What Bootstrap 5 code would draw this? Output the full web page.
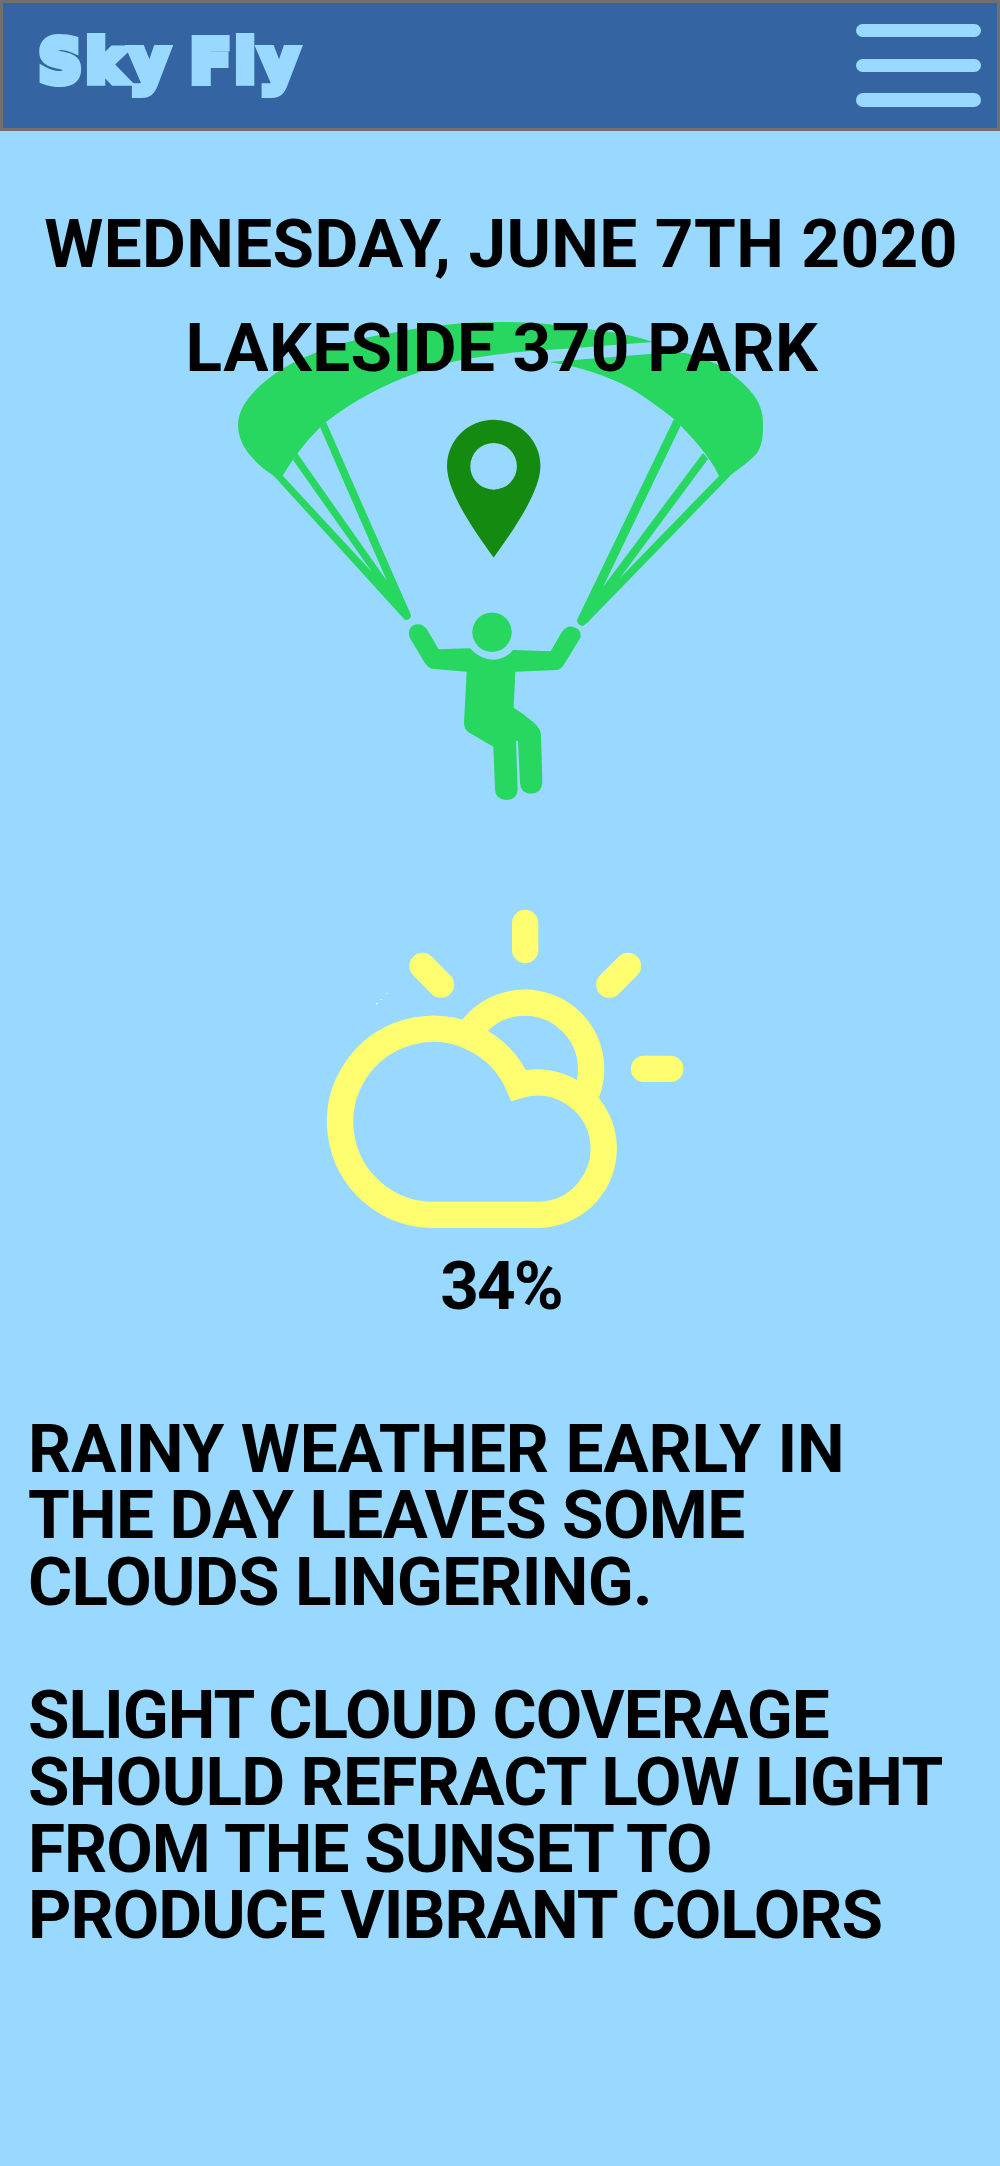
<!DOCTYPE html>
<html lang="en">
<head>
<meta charset="utf-8">
<meta name="viewport" content="width=device-width, initial-scale=1">
<title>Sky Fly</title>
<link href="https://cdn.jsdelivr.net/npm/bootstrap@5.3.0/dist/css/bootstrap.min.css" rel="stylesheet">
<style>
  body { background: #99d9ff; color: #000; font: 700 67.5px/66.67px Roboto, sans-serif; min-height: 2166px; overflow-x: hidden; }
  .topbar { height: 130.5px; background: #3465a2; border: 3px solid #707070; padding: 0 16px 0 36px; }
  .brand { font: 700 59px/60px "DejaVu Sans", sans-serif; color: #99d9ff; -webkit-text-stroke: 8px #99d9ff; paint-order: stroke; stroke-linejoin: round; letter-spacing: 4.6px; word-spacing: -8px; padding-bottom: 6px; text-decoration: none; white-space: nowrap; }
  .brand:hover { color: #99d9ff; }
  .burger { width: 125px; height: 83px; background: none; }
  .burger span { display: block; height: 13.5px; border-radius: 7px; background: #99d9ff; }
  .titles { margin-top: 61.5px; line-height: 104px; white-space: nowrap; }
  .titles h1, .titles h2 { font: inherit; margin: 0; }
  .titles h1 { letter-spacing: .38px; padding-left: 2px; }
  .titles h2 { letter-spacing: .41px; padding-left: 4px; }
  .glider { margin-top: -90px; }
  .weather { margin-top: 90px; }
  .chance { margin-top: 12.6px; letter-spacing: -2px; padding-left: 2px; }
  .report { margin-top: 96.3px; padding-left: 28px; white-space: nowrap; }
  .report p { margin-bottom: 66.67px; }
  .report span { display: block; }
  .ls-a { letter-spacing: -.14px; } .ls-b { letter-spacing: -.7px; }
  .ls-c { letter-spacing: -1px; } .ls-d { letter-spacing: -.7px; } .ls-e { letter-spacing: -1px; }
</style>
</head>
<body>
<header class="topbar d-flex align-items-center justify-content-between">
  <a class="brand" href="#">Sky Fly</a>
  <button class="burger border-0 p-0 d-flex flex-column justify-content-between" aria-label="Menu"><span class="w-100"></span><span class="w-100"></span><span class="w-100"></span></button>
</header>
<main>
  <div class="titles text-center position-relative z-1">
    <h1>WEDNESDAY, JUNE 7TH 2020</h1>
    <h2>LAKESIDE 370 PARK</h2>
  </div>
  <svg class="glider d-block" width="1000" height="500" viewBox="0 310 1000 500" aria-hidden="true">
    <g fill="#27d760">
      <!-- canopy -->
      <path d="M281 480 L274 476 C257 465 238 447 238 425 C238 407 253 391 268 379 C282 368 297 360 315 353 C341 342 368 337 397 332 C432 325 466 322 503 322 C533 322 560 325 588 329 C612 332 633 335 653 342 L600 346 C560 350 520 350 480 357 C455 360 436 366 420 372 C385 383 352 402 326 422 C311 435 294 456 282 477Z"/>
      <path d="M549 362 L650 354 Q668 351 685 353 C701 357 714 362 725 369 C737 377 748 387 755 397 C761 406 763 414 763 425 C763 438 762 445 757 453 C750 461 740 468 731 475 L722 482 L719 476 C714 465 707 456 700 447 C692 437 683 428 674 419 C660 408 645 397 630 388 C606 375 580 367 549 362Z"/>
      <!-- lines -->
      <path d="M273 475 L405 620 Q411 620 411 615 L326 422 L320 427 L387 581 L297 453 L293 460 L372 572 L283 476Z"/>
      <path d="M674 419 L577 620 Q577 625 583 626 L588 622 L730 476 L719 476 L620 578 L708 459 L703 453 L603 587 L681 425Z"/>
      <!-- rider -->
      <circle cx="492" cy="632.3" r="19.7"/>
      <path transform="translate(390 590) scale(.33333)" d="M60 145 Q50 118 70 106 Q96 96 112 120 L146 178 L240 175 Q270 209 312 209 Q350 205 369 180 L482 184 L515 127 Q528 108 547 110 Q575 115 572 142 L523 222 Q515 238 500 240 L376 245 L371 353 Q400 370 430 397 Q453 417 453 435 L457 578 Q455 610 422 611 Q391 608 390 578 L384 453 L378 453 L383 600 Q380 630 348 630 Q316 628 315 598 L310 470 L238 428 Q222 418 222 398 L230 245 L125 236 Q113 232 105 220Z"/>
    </g>
    <!-- location pin -->
    <path fill="#158a10" fill-rule="evenodd" d="M447 466 A46.7 46.3 0 1 1 540.4 466 C540.4 491 515 528 493.7 557.5 C472 528 447 491 447 466Z M470.3 466.3 a23.3 23.3 0 1 0 46.6 0 a23.3 23.3 0 1 0 -46.6 0Z"/>
  </svg>
  <svg class="weather d-block" width="1000" height="340" viewBox="0 900 1000 340" aria-hidden="true">
    <g transform="translate(310 890) scale(.33333)" stroke="#fffe71" stroke-width="79" fill="#99d9ff" stroke-linecap="round">
      <circle cx="644.5" cy="537" r="199"/>
      <path stroke-linecap="butt" d="M369.5 974.5 A279 279 0 1 1 625.9 585.8 A198.5 198.5 0 1 1 684 974.5Z"/>
      <path d="M645.5 99V180M1002 536.5H1081M337.5 228L393 284M954 228L898 284"/>
    </g>
    <path fill="#e8f7ff" d="M376 1003h2v1.500h-2zM380.500 999h1.500v1h-1.500zM386.500 993h1.200v1h-1.200z"/>
  </svg>
  <div class="chance text-center">34%</div>
  <section class="report">
    <p><span class="ls-a">RAINY WEATHER EARLY IN</span><span class="ls-b">THE DAY LEAVES SOME</span><span class="ls-b">CLOUDS LINGERING.</span></p>
    <p><span class="ls-c">SLIGHT CLOUD COVERAGE</span><span class="ls-d">SHOULD REFRACT LOW LIGHT</span><span class="ls-e">FROM THE SUNSET TO</span><span class="ls-c">PRODUCE VIBRANT COLORS</span></p>
  </section>
</main>
<script src="https://cdn.jsdelivr.net/npm/bootstrap@5.3.0/dist/js/bootstrap.bundle.min.js"></script>
</body>
</html>
